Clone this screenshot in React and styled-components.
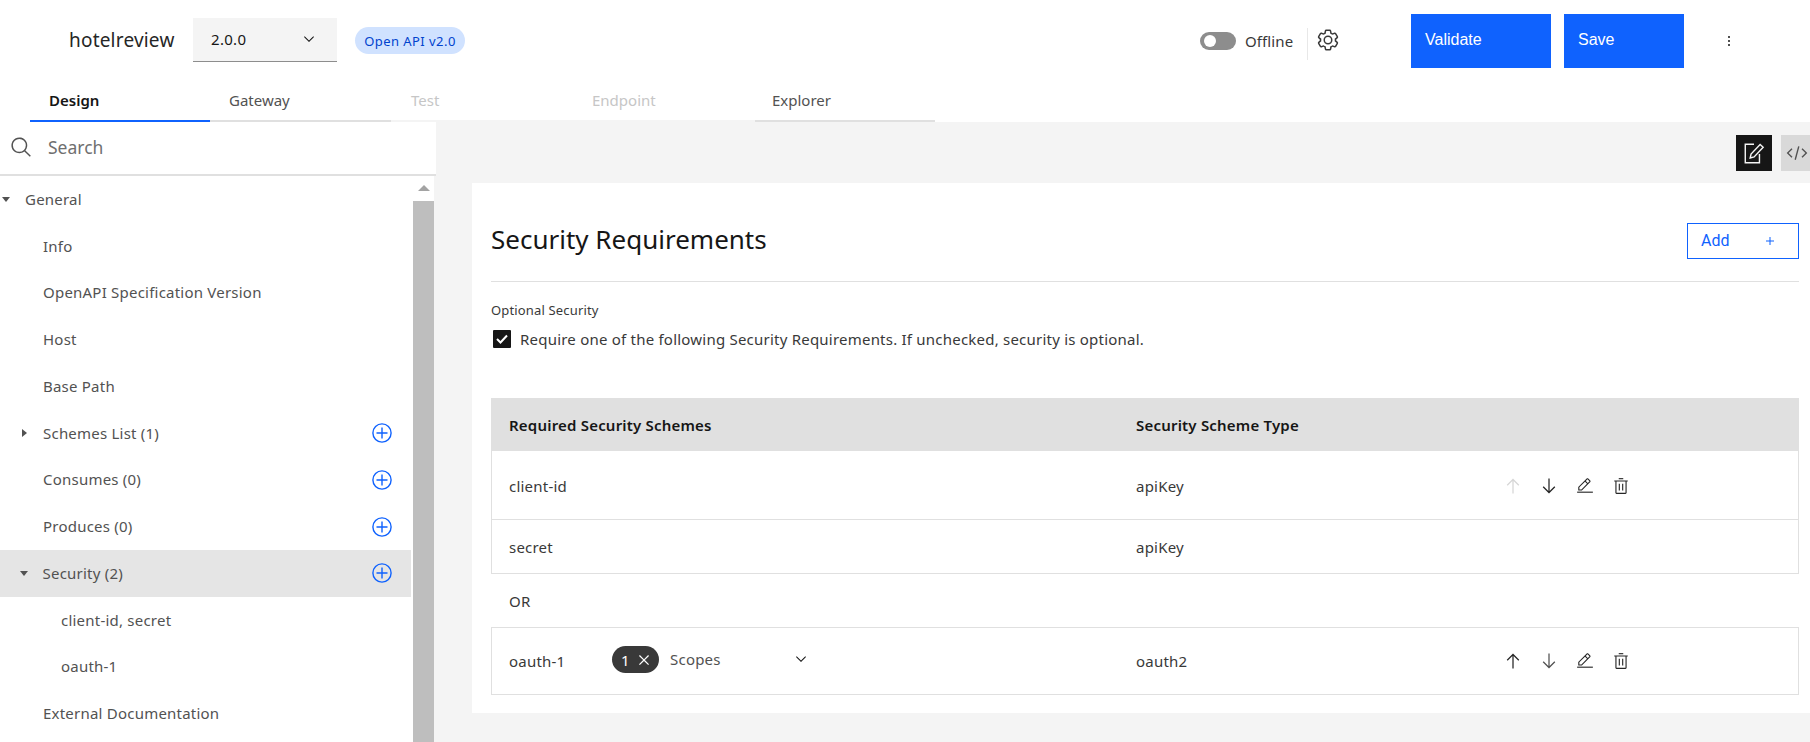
import React from 'react';
import styled, { createGlobalStyle } from 'styled-components';

const FONT = `'Noto Sans', 'Open Sans', sans-serif`;

const GlobalStyle = createGlobalStyle`
  html, body { margin: 0; padding: 0; height: 100%; background: #fff; }
  body { font-family: ${FONT}; color: #161616; overflow: hidden; }
  * { box-sizing: border-box; }
`;

const Icon = ({ size = 16, color = 'currentColor', children }) => (
  <svg width={size} height={size} viewBox="0 0 32 32" fill={color} style={{ display: 'block', flex: 'none' }}>
    {children}
  </svg>
);

const ChevronDown = (p) => <Icon {...p}><path d="M16 22L6 12 7.4 10.6 16 19.2 24.6 10.6 26 12z" /></Icon>;
const ArrowUp = (p) => <Icon {...p}><path d="M16 4L6 14 7.41 15.41 15 7.83 15 28 17 28 17 7.83 24.59 15.41 26 14 16 4z" /></Icon>;
const ArrowDown = (p) => <Icon {...p}><path d="M24.59 16.59L17 24.17 17 4 15 4 15 24.17 7.41 16.59 6 18 16 28 26 18 24.59 16.59z" /></Icon>;
const EditIcon = (p) => (
  <Icon {...p}>
    <rect x="2" y="26" width="28" height="2" />
    <path d="M25.4,9c0.8-0.8,0.8-2,0-2.8l-3.6-3.6c-0.8-0.8-2-0.8-2.8,0l-15,15V24h6.4L25.4,9z M20.4,4L24,7.6l-3,3L17.4,7L20.4,4z M6,22v-3.6l10-10l3.6,3.6l-10,10H6z" />
  </Icon>
);
const TrashIcon = (p) => (
  <Icon {...p}>
    <rect x="12" y="12" width="2" height="12" />
    <rect x="18" y="12" width="2" height="12" />
    <path d="M4,6V8H6V28a2,2,0,0,0,2,2H24a2,2,0,0,0,2-2V8h2V6ZM8,28V8H24V28Z" />
    <rect x="12" y="2" width="8" height="2" />
  </Icon>
);
const GearIcon = (p) => (
  <Icon {...p}>
    <path d="M27,16.76c0-.25,0-.5,0-.76s0-.51,0-.77l1.92-1.68A2,2,0,0,0,29.3,11L26.94,7a2,2,0,0,0-1.73-1,2,2,0,0,0-.64.1l-2.43.82a11.35,11.35,0,0,0-1.31-.75l-.51-2.52a2,2,0,0,0-2-1.61H13.64a2,2,0,0,0-2,1.61l-.51,2.52a11.48,11.48,0,0,0-1.32.75L7.43,6.06A2,2,0,0,0,6.79,6,2,2,0,0,0,5.06,7L2.7,11a2,2,0,0,0,.41,2.51L5,15.24c0,.25,0,.5,0,.76s0,.51,0,.77L3.11,18.45A2,2,0,0,0,2.7,21L5.06,25a2,2,0,0,0,1.73,1,2,2,0,0,0,.64-.1l2.43-.82a11.35,11.35,0,0,0,1.31.75l.51,2.52a2,2,0,0,0,2,1.61h4.72a2,2,0,0,0,2-1.61l.51-2.52a11.48,11.48,0,0,0,1.32-.75l2.42.82a2,2,0,0,0,.64.1,2,2,0,0,0,1.73-1L29.3,21a2,2,0,0,0-.41-2.51ZM25.21,24l-3.43-1.16a8.86,8.86,0,0,1-2.71,1.57L18.36,28H13.64l-.71-3.55a9.36,9.36,0,0,1-2.7-1.57L6.79,24,4.43,20l2.72-2.4a8.9,8.9,0,0,1,0-3.13L4.43,12,6.79,8l3.43,1.16a8.86,8.86,0,0,1,2.71-1.57L13.64,4h4.72l.71,3.55a9.36,9.36,0,0,1,2.7,1.57L25.21,8,27.57,12l-2.72,2.4a8.9,8.9,0,0,1,0,3.13L27.57,20Z" />
    <path d="M16,22a6,6,0,1,1,6-6A5.94,5.94,0,0,1,16,22Zm0-10a3.91,3.91,0,0,0-4,4,3.91,3.91,0,0,0,4,4,3.91,3.91,0,0,0,4-4A3.91,3.91,0,0,0,16,12Z" />
  </Icon>
);
const SearchIcon = (p) => <Icon {...p}><path d="M29,27.5859l-7.5521-7.5521a11.0177,11.0177,0,1,0-1.4141,1.4141L27.5859,29ZM4,13a9,9,0,1,1,9,9A9.01,9.01,0,0,1,4,13Z" /></Icon>;
const CloseIcon = (p) => <Icon {...p}><path d="M24 9.4L22.6 8 16 14.6 9.4 8 8 9.4 14.6 16 8 22.6 9.4 24 16 17.4 22.6 24 24 22.6 17.4 16 24 9.4z" /></Icon>;
const PlusIcon = (p) => <Icon {...p}><path d="M17 15L17 8 15 8 15 15 8 15 8 17 15 17 15 24 17 24 17 17 24 17 24 15z" /></Icon>;
const MenuDots = (p) => <Icon {...p}><circle cx="16" cy="8" r="2" /><circle cx="16" cy="16" r="2" /><circle cx="16" cy="24" r="2" /></Icon>;
const CodeIcon = (p) => (
  <Icon {...p}>
    <path d="M31 16L24 23 22.59 21.59 28.17 16 22.59 10.41 24 9 31 16z" />
    <path d="M1 16L8 9 9.41 10.41 3.83 16 9.41 21.59 8 23 1 16z" />
    <path d="M12.419 25.484L17.639 6 19.57 6.518 14.35 26.002z" />
  </Icon>
);

const AddCircle = () => (
  <svg width="20" height="20" viewBox="0 0 20 20" fill="none" stroke="#0f62fe" strokeWidth="1.4" style={{ display: 'block' }}>
    <circle cx="10" cy="10" r="9.1" />
    <path d="M10 4.5v11M4.5 10h11" />
  </svg>
);

const DocPencil = () => (
  <svg width="22" height="24" viewBox="0 0 20 22" fill="none" stroke="#f4f4f4" strokeWidth="1.3" style={{ display: 'block' }}>
    <path d="M10 3H2v17h13v-8" />
    <path d="M6.5 15.5l.8-3.6L15.6 3.2l2.8 2.6-8.3 8.8z" />
  </svg>
);

const Page = styled.div`
  height: 100vh;
  display: flex;
  flex-direction: column;
  overflow: hidden;
`;

const TopBar = styled.header`
  height: 82px;
  flex: none;
  display: flex;
  align-items: flex-start;
  background: #fff;
`;

const AppName = styled.div`
  margin: 28px 19px 0 69px;
  font-size: 19px;
  line-height: 24px;
  letter-spacing: 0.2px;
  width: 105px;
  white-space: nowrap;
  color: #262626;
`;

const VersionSelect = styled.div`
  margin-top: 18px;
  width: 144px;
  height: 44px;
  background: #f4f4f4;
  border-bottom: 1px solid #8d8d8d;
  display: flex;
  align-items: center;
  justify-content: space-between;
  padding: 0 20px 2px 18px;
  font-size: 15px;
  letter-spacing: 0.3px;
  color: #161616;
`;

const SpecTag = styled.span`
  margin: 27px 0 0 18px;
  width: 110px;
  height: 27px;
  border-radius: 14px;
  background: #d0e2ff;
  color: #0043ce;
  font-size: 13px;
  letter-spacing: 0.45px;
  display: flex;
  align-items: center;
  justify-content: center;
  white-space: nowrap;
`;

const OfflineGroup = styled.div`
  margin: 29px 0 0 735px;
  display: flex;
  align-items: center;
  height: 24px;
`;

const Toggle = styled.span`
  width: 36px;
  height: 18px;
  border-radius: 9px;
  background: #8d8d8d;
  display: flex;
  align-items: center;
  padding-left: 4px;
  &::before {
    content: '';
    width: 12px;
    height: 12px;
    border-radius: 50%;
    background: #fff;
  }
`;

const OfflineLabel = styled.span`
  margin-left: 9px;
  width: 62px;
  font-size: 15px;
  letter-spacing: 0.1px;
  color: #393939;
`;

const GearBox = styled.div`
  height: 32px;
  margin: 28px 0 0 0;
  padding: 0 0 0 8px;
  width: 104px;
  border-left: 1px solid #e8e8e8;
  color: #393939;
  display: flex;
  align-items: flex-start;
`;

const PrimaryButton = styled.button`
  margin-top: 14px;
  width: ${(p) => p.$width}px;
  height: 54px;
  border: 0;
  background: #0f62fe;
  color: #fff;
  text-align: left;
  padding: 0 0 3px 14px;
  font-family: 'Liberation Sans', Arial, sans-serif;
  font-size: 16px;
`;

const ButtonGap = styled.div`
  width: 13px;
`;

const KebabBox = styled.div`
  margin: 33px 0 0 37px;
  color: #161616;
`;

const TabRow = styled.nav`
  height: 40px;
  flex: none;
  display: flex;
  padding-left: 30px;
`;

const Tab = styled.div`
  width: ${(p) => p.$width || 181}px;
  border-bottom: 2px solid ${(p) => (p.$active ? '#0f62fe' : p.$disabled ? '#f4f4f4' : '#e0e0e0')};
  padding: 7px 0 0 ${(p) => p.$pad || 19}px;
  font-size: 15px;
  line-height: 22px;
  font-weight: ${(p) => (p.$active ? 600 : 400)};
  color: ${(p) => (p.$active ? '#161616' : p.$disabled ? '#c6c6c6' : '#525252')};
`;

const Body = styled.div`
  flex: 1;
  min-height: 0;
  display: flex;
  background: #f4f4f4;
`;

const Sidebar = styled.aside`
  width: 436px;
  flex: none;
  display: flex;
  flex-direction: column;
`;

const SearchRow = styled.div`
  height: 54px;
  flex: none;
  background: #fff;
  border-bottom: 2px solid #e0e0e0;
  display: flex;
  align-items: center;
  padding: 0 0 2px 10px;
  gap: 15px;
  color: #525252;
  font-size: 17.5px;
`;

const SearchText = styled.span`
  color: #6f6f6f;
`;

const TreeWrap = styled.div`
  width: 434px;
  flex: 1;
  min-height: 0;
  display: flex;
  background: #fff;
  overflow: hidden;
`;

const Tree = styled.div`
  width: 411px;
  flex: none;
`;

const TreeRow = styled.div`
  height: 46.75px;
  display: flex;
  align-items: center;
  padding-left: ${(p) => p.$indent}px;
  padding-right: 19px;
  font-size: 15px;
  letter-spacing: 0.22px;
  color: #525252;
  background: ${(p) => (p.$selected ? '#e5e5e5' : 'transparent')};
`;

const TreeLabel = styled.span`
  flex: 1;
  margin-top: -1px;
`;

const Caret = styled.span`
  width: 0;
  height: 0;
  flex: none;
  margin-right: ${(p) => p.$gap}px;
  border-style: solid;
  border-color: transparent;
  ${(p) =>
    p.$open
      ? 'border-width: 5px 4.5px 0 4.5px; border-top-color: #525252;'
      : 'border-width: 4.5px 0 4.5px 5px; border-left-color: #525252;'}
`;

const ScrollTrack = styled.div`
  flex: 1;
  padding-left: 2px;
  display: flex;
  flex-direction: column;
`;

const ScrollUp = styled.div`
  height: 25px;
  flex: none;
  display: flex;
  justify-content: center;
  padding-top: 9px;
  &::before {
    content: '';
    width: 0;
    height: 0;
    border-style: solid;
    border-color: transparent;
    border-width: 0 6px 6px 6px;
    border-bottom-color: #a3a3a3;
  }
`;

const ScrollThumb = styled.div`
  flex: 1;
  background: #bebebe;
`;

const Main = styled.main`
  flex: 1;
  min-width: 0;
  display: flex;
  flex-direction: column;
`;

const ViewSwitch = styled.div`
  height: 61px;
  flex: none;
  padding-top: 13px;
  display: flex;
  justify-content: flex-end;
  gap: 9px;
`;

const ViewButton = styled.div`
  width: ${(p) => p.$width}px;
  height: 36px;
  background: ${(p) => (p.$active ? '#161616' : '#d9d9d9')};
  color: #525252;
  display: flex;
  align-items: center;
  justify-content: ${(p) => (p.$active ? 'center' : 'flex-start')};
  padding-left: ${(p) => (p.$active ? 0 : 5)}px;
`;

const Card = styled.section`
  margin-left: 36px;
  height: 530px;
  flex: none;
  background: #fff;
  padding: 40px 11px 0 19px;
`;

const CardHead = styled.div`
  display: flex;
  align-items: center;
  justify-content: space-between;
  height: 59px;
  padding-bottom: 23px;
  border-bottom: 1px solid #e0e0e0;
`;

const Title = styled.h2`
  margin: 0 0 4px;
  font-size: 26px;
  font-weight: 400;
  line-height: 32px;
  color: #161616;
`;

const AddButton = styled.button`
  width: 112px;
  height: 36px;
  border: 1px solid #0f62fe;
  background: #fff;
  color: #0f62fe;
  display: flex;
  align-items: center;
  justify-content: space-between;
  padding: 0 20px 0 13px;
  font-family: 'Roboto', sans-serif;
  font-size: 16px;
`;

const FieldLabel = styled.div`
  margin-top: 20px;
  font-size: 13px;
  line-height: 16px;
  letter-spacing: 0.16px;
  color: #393939;
`;

const CheckRow = styled.div`
  margin: 12px 0 0 2px;
  height: 18px;
  display: flex;
  align-items: center;
  gap: 9px;
  font-size: 15px;
  letter-spacing: 0.22px;
  white-space: nowrap;
  color: #393939;
`;

const Check = styled.span`
  width: 18px;
  height: 18px;
  flex: none;
  border-radius: 1px;
  background: #161616;
  display: flex;
  align-items: center;
  justify-content: center;
`;

const TableHead = styled.div`
  margin-top: 50px;
  height: 53px;
  background: #e0e0e0;
  display: grid;
  grid-template-columns: 627px 1fr;
  align-items: center;
  padding-left: 18px;
  font-size: 15px;
  font-weight: 600;
  letter-spacing: 0.2px;
  color: #161616;
`;

const RowGroup = styled.div`
  border: 1px solid #e0e0e0;
  border-top-width: ${(p) => (p.$noTop ? 0 : 1)}px;
`;

const Row = styled.div`
  height: ${(p) => p.$height}px;
  display: grid;
  grid-template-columns: 627px 359px 1fr;
  align-items: center;
  padding: ${(p) => (p.$flush ? 0 : 1)}px 0 0 17px;
  font-size: 15px;
  letter-spacing: 0.22px;
  color: #393939;
  & + & {
    border-top: 1px solid #e0e0e0;
  }
`;

const SchemeCell = styled.div`
  display: flex;
  align-items: center;
`;

const SchemeName = styled.span`
  width: 103px;
`;

const ScopeChip = styled.span`
  width: 47px;
  height: 27px;
  border-radius: 14px;
  background: #393939;
  color: #fff;
  display: flex;
  align-items: center;
  padding-left: 9px;
  gap: 4px;
  font-size: 15px;
  margin-top: -3px;
`;

const ScopeLabel = styled.span`
  margin: -4px 0 0 11px;
  width: 123px;
  color: #525252;
`;

const ScopeChevron = styled.span`
  margin-top: -5px;
  color: #161616;
`;

const Actions = styled.div`
  display: flex;
  align-items: center;
`;

const ActionButton = styled.span`
  width: 36px;
  display: flex;
  justify-content: center;
  color: ${(p) => (p.$disabled ? '#d6d6d6' : '#262626')};
`;

const OrLabel = styled.div`
  height: 53px;
  padding-left: 18px;
  display: flex;
  align-items: center;
  font-size: 15px;
  letter-spacing: 0.16px;
  color: #393939;
`;

const tree = [
  { label: 'General', indent: 2, caret: 'open', gap: 15 },
  { label: 'Info', indent: 43 },
  { label: 'OpenAPI Specification Version', indent: 43 },
  { label: 'Host', indent: 43 },
  { label: 'Base Path', indent: 43 },
  { label: 'Schemes List (1)', indent: 22, caret: 'closed', gap: 16, add: true },
  { label: 'Consumes (0)', indent: 43, add: true },
  { label: 'Produces (0)', indent: 43, add: true },
  { label: 'Security (2)', indent: 20, caret: 'open', gap: 14.5, add: true, selected: true },
  { label: 'client-id, secret', indent: 61 },
  { label: 'oauth-1', indent: 61 },
  { label: 'External Documentation', indent: 43 },
];

function RowActions({ upDisabled, downFaint }) {
  return (
    <Actions>
      <ActionButton $disabled={upDisabled}><ArrowUp size={20} /></ActionButton>
      <ActionButton><ArrowDown size={20} color={downFaint ? '#525252' : undefined} /></ActionButton>
      <ActionButton><EditIcon size={18} /></ActionButton>
      <ActionButton><TrashIcon size={18} /></ActionButton>
    </Actions>
  );
}

export default function App() {
  return (
    <Page>
      <GlobalStyle />
      <TopBar>
        <AppName>hotelreview</AppName>
        <VersionSelect>
          2.0.0
          <ChevronDown />
        </VersionSelect>
        <SpecTag>Open API v2.0</SpecTag>
        <OfflineGroup>
          <Toggle />
          <OfflineLabel>Offline</OfflineLabel>
        </OfflineGroup>
        <GearBox>
          <GearIcon size={24} />
        </GearBox>
        <PrimaryButton $width={140}>Validate</PrimaryButton>
        <ButtonGap />
        <PrimaryButton $width={120}>Save</PrimaryButton>
        <KebabBox><MenuDots /></KebabBox>
      </TopBar>
      <TabRow>
        <Tab $active $width={180}>Design</Tab>
        <Tab>Gateway</Tab>
        <Tab $disabled $pad={20}>Test</Tab>
        <Tab $disabled $width={183} $pad={20}>Endpoint</Tab>
        <Tab $width={180} $pad={17}>Explorer</Tab>
      </TabRow>
      <Body>
        <Sidebar>
          <SearchRow>
            <SearchIcon size={23} />
            <SearchText>Search</SearchText>
          </SearchRow>
          <TreeWrap>
            <Tree>
              {tree.map((item) => (
                <TreeRow key={item.label} $indent={item.indent} $selected={item.selected}>
                  {item.caret && <Caret $open={item.caret === 'open'} $gap={item.gap} />}
                  <TreeLabel>{item.label}</TreeLabel>
                  {item.add && <AddCircle />}
                </TreeRow>
              ))}
            </Tree>
            <ScrollTrack>
              <ScrollUp />
              <ScrollThumb />
            </ScrollTrack>
          </TreeWrap>
        </Sidebar>
        <Main>
          <ViewSwitch>
            <ViewButton $active $width={36}><DocPencil /></ViewButton>
            <ViewButton $width={29}><CodeIcon size={22} /></ViewButton>
          </ViewSwitch>
          <Card>
            <CardHead>
              <Title>Security Requirements</Title>
              <AddButton>Add<PlusIcon /></AddButton>
            </CardHead>
            <FieldLabel>Optional Security</FieldLabel>
            <CheckRow>
              <Check>
                <svg width="12" height="10" viewBox="0 0 12 10" fill="none" stroke="#fff" strokeWidth="2">
                  <path d="M1 5l3.5 3.5L11 1.5" />
                </svg>
              </Check>
              Require one of the following Security Requirements. If unchecked, security is optional.
            </CheckRow>
            <TableHead>
              <span>Required Security Schemes</span>
              <span>Security Scheme Type</span>
            </TableHead>
            <RowGroup $noTop>
              <Row $height={68}>
                <span>client-id</span>
                <span>apiKey</span>
                <RowActions upDisabled />
              </Row>
              <Row $height={54}>
                <span>secret</span>
                <span>apiKey</span>
              </Row>
            </RowGroup>
            <OrLabel>OR</OrLabel>
            <RowGroup>
              <Row $height={66} $flush>
                <SchemeCell>
                  <SchemeName>oauth-1</SchemeName>
                  <ScopeChip>1<CloseIcon size={20} /></ScopeChip>
                  <ScopeLabel>Scopes</ScopeLabel>
                  <ScopeChevron><ChevronDown /></ScopeChevron>
                </SchemeCell>
                <span>oauth2</span>
                <RowActions downFaint />
              </Row>
            </RowGroup>
          </Card>
        </Main>
      </Body>
    </Page>
  );
}
